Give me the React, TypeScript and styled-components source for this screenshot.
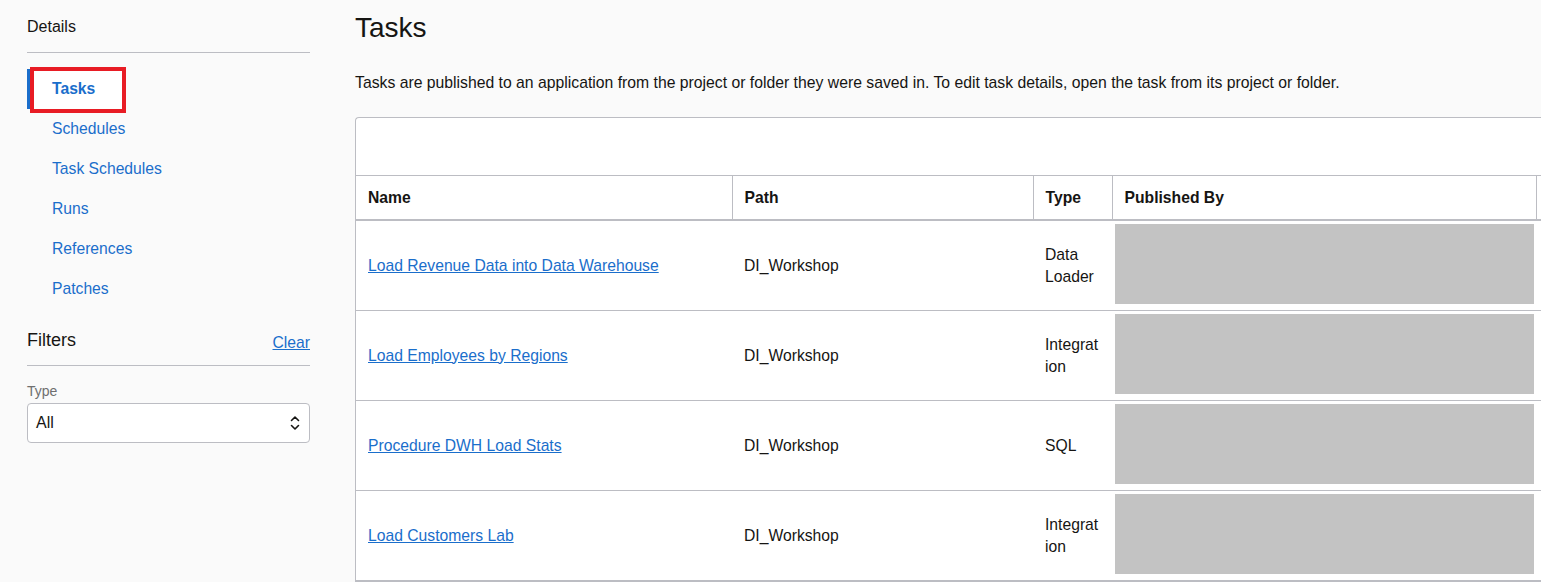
import styled, { createGlobalStyle } from 'styled-components';

const GlobalStyle = createGlobalStyle`
  html, body {
    margin: 0;
    padding: 0;
    background: #fafafa;
    overflow: hidden;
  }
  body {
    font-family: 'Liberation Sans', Arial, sans-serif;
    color: #161513;
  }
`;

const navItems = ['Tasks', 'Schedules', 'Task Schedules', 'Runs', 'References', 'Patches'];

const rows = [
  { name: 'Load Revenue Data into Data Warehouse', path: 'DI_Workshop', type: 'Data Loader' },
  { name: 'Load Employees by Regions', path: 'DI_Workshop', type: 'Integration' },
  { name: 'Procedure DWH Load Stats', path: 'DI_Workshop', type: 'SQL' },
  { name: 'Load Customers Lab', path: 'DI_Workshop', type: 'Integration' },
];

const App = () => {
  return (
    <>
      <GlobalStyle />
      <Page>
        <Sidebar>
          <SectionTitle>Details</SectionTitle>
          <NavList>
            {navItems.map((item, i) => (
              <NavItem key={item} $active={i === 0}>
                {i === 0 && <Highlight />}
                <NavLabel>{item}</NavLabel>
              </NavItem>
            ))}
          </NavList>
          <FilterHeader>
            <FilterTitle>Filters</FilterTitle>
            <ClearLink href="#">Clear</ClearLink>
          </FilterHeader>
          <FieldLabel>Type</FieldLabel>
          <Select>
            <span>All</span>
            <svg width="12" height="18" viewBox="0 0 12 18" fill="none" stroke="#161513" strokeWidth="1.6" strokeLinecap="round" strokeLinejoin="round">
              <path d="M2.5 6.5 6 3l3.5 3.5" />
              <path d="M2.5 11.5 6 15l3.5-3.5" />
            </svg>
          </Select>
        </Sidebar>
        <Main>
          <Heading>Tasks</Heading>
          <Description>
            Tasks are published to an application from the project or folder they were saved in. To edit task details, open the task from its project or folder.
          </Description>
          <TablePanel>
            <Toolbar />
            <Table>
              <colgroup>
                <col style={{ width: 376 }} />
                <col style={{ width: 301 }} />
                <col style={{ width: 79 }} />
                <col style={{ width: 424 }} />
                <col style={{ width: 240 }} />
              </colgroup>
              <thead>
                <tr>
                  <Th>Name</Th>
                  <Th>Path</Th>
                  <Th>Type</Th>
                  <Th>Published By</Th>
                  <Th />
                </tr>
              </thead>
              <tbody>
                {rows.map(row => (
                  <tr key={row.name}>
                    <Td>
                      <TaskLink href="#">{row.name}</TaskLink>
                    </Td>
                    <Td>{row.path}</Td>
                    <TypeCell>{row.type}</TypeCell>
                    <RedactedCell>
                      <Redacted />
                    </RedactedCell>
                    <Td />
                  </tr>
                ))}
              </tbody>
            </Table>
          </TablePanel>
        </Main>
      </Page>
    </>
  );
};

export default App;

const Page = styled.div`
  display: flex;
  align-items: flex-start;
  min-height: 582px;
`;

const Sidebar = styled.aside`
  flex: 0 0 283px;
  margin-left: 27px;
  display: flex;
  flex-direction: column;
`;

const SectionTitle = styled.div`
  font-size: 16px;
  line-height: 20px;
  padding: 17px 0 15px;
  border-bottom: 1px solid #bcbdc3;
`;

const NavList = styled.ul`
  list-style: none;
  margin: 16px 0 0;
  padding: 0;
`;

const NavItem = styled.li<{ $active?: boolean }>`
  position: relative;
  height: 40px;
  display: flex;
  align-items: center;
  padding-left: 22px;
  border-left: 3px solid ${p => (p.$active ? '#1a6ecb' : 'transparent')};
  color: #1a6ecb;
  font-size: 15.7px;
  font-weight: ${p => (p.$active ? 700 : 400)};
  cursor: pointer;
`;

const NavLabel = styled.span`
  position: relative;
`;

const Highlight = styled.span`
  position: absolute;
  left: 0;
  top: -2px;
  width: 96px;
  height: 46px;
  box-sizing: border-box;
  border: 4px solid #e81c24;
  background: #ffffff;
`;

const FilterHeader = styled.div`
  display: flex;
  justify-content: space-between;
  align-items: flex-end;
  margin-top: 19px;
  padding-bottom: 13px;
  border-bottom: 1px solid #bcbdc3;
`;

const FilterTitle = styled.h2`
  margin: 0;
  font-size: 18px;
  line-height: 24px;
  font-weight: 400;
`;

const ClearLink = styled.a`
  color: #1a6ecb;
  font-size: 15.7px;
  line-height: 18px;
  text-decoration: underline;
`;

const FieldLabel = styled.label`
  margin-top: 17px;
  font-size: 14px;
  line-height: 16px;
  color: #6f6f6f;
`;

const Select = styled.div`
  margin-top: 4px;
  height: 40px;
  box-sizing: border-box;
  display: flex;
  align-items: center;
  justify-content: space-between;
  padding: 0 8px 0 8px;
  background: #fff;
  border: 1px solid #bcbdc3;
  border-radius: 4px;
  font-size: 16px;
`;

const Main = styled.main`
  flex: 0 0 auto;
  margin-left: 45px;
  display: flex;
  flex-direction: column;
`;

const Heading = styled.h1`
  margin: 10px 0 0;
  font-size: 28px;
  line-height: 36px;
  font-weight: 400;
`;

const Description = styled.p`
  margin: 26px 0 0;
  font-size: 15.75px;
  line-height: 22px;
  white-space: nowrap;
`;

const TablePanel = styled.section`
  margin-top: 23px;
  width: 1420px;
  background: #fff;
  border: 1px solid #bcbdc3;
  border-right: none;
  border-radius: 4px 0 0 0;
`;

const Toolbar = styled.div`
  height: 57px;
  border-bottom: 1px solid #bcbdc3;
`;

const Table = styled.table`
  table-layout: fixed;
  border-collapse: collapse;
  width: 1420px;
`;

const Th = styled.th`
  height: 44px;
  padding: 0 12px;
  text-align: left;
  font-size: 15.7px;
  font-weight: 700;
  border-right: 1px solid #bcbdc3;
  border-bottom: 2px solid #bcbdc3;
  box-sizing: border-box;
`;

const Td = styled.td`
  height: 89px;
  padding: 0 12px;
  font-size: 15.7px;
  line-height: 22px;
  vertical-align: middle;
  border-bottom: 1px solid #bcbdc3;
`;

const TypeCell = styled(Td)`
  overflow-wrap: anywhere;
`;

const RedactedCell = styled(Td)`
  height: 80px;
  padding: 3px 2px 6px 3px;
`;

const Redacted = styled.div`
  height: 80px;
  background: #c3c3c3;
`;

const TaskLink = styled.a`
  color: #1a6ecb;
  text-decoration: underline;
`;
